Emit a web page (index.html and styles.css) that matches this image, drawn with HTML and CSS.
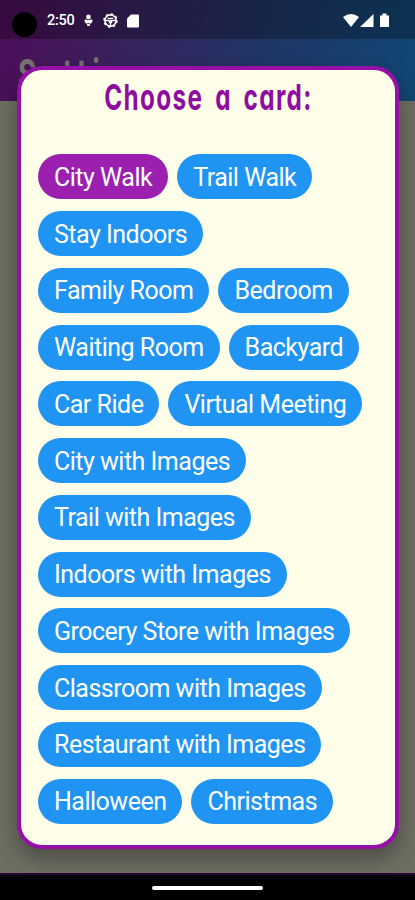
FILE: index.html
```html
<!DOCTYPE html>
<html lang="en">
<head>
<meta charset="utf-8">
<title>Choose a card</title>
<link rel="stylesheet" href="styles.css">
</head>
<body>
<div class="screen">
  <header class="top">
    <div class="status">
      <span class="camera"></span>
      <span class="time">2:50</span>
      <svg class="mic" viewBox="0 0 10 14"><circle cx="5" cy="3" r="2.6"/><path d="M.5 6.500a4.500 4.500 0 0 0 9 0L7.500 5.500Q5 7.500 2.500 5.500ZM3.500 10h3v3h-3z"/></svg>
      <svg class="wheel" viewBox="0 0 16 16"><circle cx="8" cy="8" r="6" fill="none" stroke="#fff" stroke-width="1.700"/><circle cx="8" cy="8" r="7" fill="none" stroke="#fff" stroke-width="1.500" stroke-dasharray="2.750"/><path d="M2 7.200h12v1.500H9.800V11H8.700v3H7.300v-3H6.200V8.700H2zM5 5h6v1.500H5z"/></svg>
      <svg class="sd" viewBox="0 0 12 14"><path d="M4 .5h7q1 0 1 1v11q0 1-1 1H1q-1 0-1-1v-8z"/></svg>
      <svg class="signals" viewBox="0 0 48 16"><path d="M0 4Q8-2 16 4L8 14zM30.500 1v13H17zM37 2.500h2.500V.5h4v2H46V14h-9z"/></svg>
    </div>
    <div class="appbar"><span>Settings</span></div>
  </header>
  <main class="backdrop"></main>
  <footer class="navbar"><span class="handle"></span></footer>
  <section class="dialog">
    <h1><span>Choose a card:</span></h1>
    <div class="chips">
      <button class="chip selected">City Walk</button>
      <button class="chip">Trail Walk</button>
      <button class="chip">Stay Indoors</button>
      <button class="chip">Family Room</button>
      <button class="chip">Bedroom</button>
      <button class="chip">Waiting Room</button>
      <button class="chip">Backyard</button>
      <button class="chip">Car Ride</button>
      <button class="chip">Virtual Meeting</button>
      <button class="chip">City with Images</button>
      <button class="chip">Trail with Images</button>
      <button class="chip">Indoors with Images</button>
      <button class="chip">Grocery Store with Images</button>
      <button class="chip">Classroom with Images</button>
      <button class="chip">Restaurant with Images</button>
      <button class="chip">Halloween</button>
      <button class="chip">Christmas</button>
    </div>
  </section>
</div>
</body>
</html>
```
FILE: styles.css
```css
* { box-sizing: border-box; }
body { margin: 0; font-family: Roboto, "Liberation Sans", sans-serif; }
.screen { position: relative; width: 415px; height: 900px; overflow: hidden; display: flex; flex-direction: column; background: #6e6e62; }
.top { height: 101px; background: linear-gradient(100deg, #4e0e59 0%, #35255f 35%, #203565 62%, #114774 100%); }
.status { height: 39px; display: flex; align-items: center; padding: 2px 27px 0 12px; background: rgba(0, 0, 0, .28); color: #fff; }
.status svg { fill: #fff; flex: none; }
.camera { width: 25px; height: 25px; margin-top: 8px; border-radius: 50%; background: #000; }
.time { margin-left: 10px; width: 29px; font-size: 14.500px; font-weight: 500; letter-spacing: -.3px; }
.mic { width: 9px; height: 13px; margin-left: 8px; }
.wheel { width: 15px; height: 15px; margin-left: 10px; }
.sd { width: 12px; height: 14px; margin-left: 9px; }
.signals { width: 48px; height: 16px; margin-left: auto; margin-right: -3px; }
.appbar { height: 62px; padding: 15px 0 0 18px; color: #78736f; font: 700 40px Inter, sans-serif; line-height: 40px; }
.appbar span { display: inline-block; transform: scaleX(.7); transform-origin: left; letter-spacing: 7px; }
.backdrop { flex: 1; }
.navbar { height: 27px; border-top: 2px solid #2d0633; background: #000; display: flex; justify-content: center; }
.handle { width: 111px; height: 4px; margin-top: 11px; border-radius: 2px; background: #fff; }
.dialog { position: absolute; left: 17px; top: 66px; width: 382px; height: 783px; border: 4px solid #960fa8; border-radius: 25px; background: #ffffe9; box-shadow: 0 9px 20px 2px rgba(0, 0, 0, .28); padding-left: 17px; }
h1 { margin: 6px 17px 0 0; height: 78.300px; color: #8e0da0; text-align: center; font: 700 36px Inter, sans-serif; font-feature-settings: "cv11"; line-height: 42px; white-space: nowrap; }
h1 span { display: inline-block; transform: scaleX(.675); margin: 0 -80px; letter-spacing: 2px; word-spacing: 7px; }
.chips { display: flex; flex-wrap: wrap; gap: 11.750px 9px; padding-right: 17px; }
.chip { height: 45px; padding: 1px 16px 0; border: 0; border-radius: 23px; background: #2094f3; color: #fff; font: 400 25px Roboto, sans-serif; letter-spacing: -.5px; white-space: nowrap; }
.selected { background: #9c20b0; }
```
